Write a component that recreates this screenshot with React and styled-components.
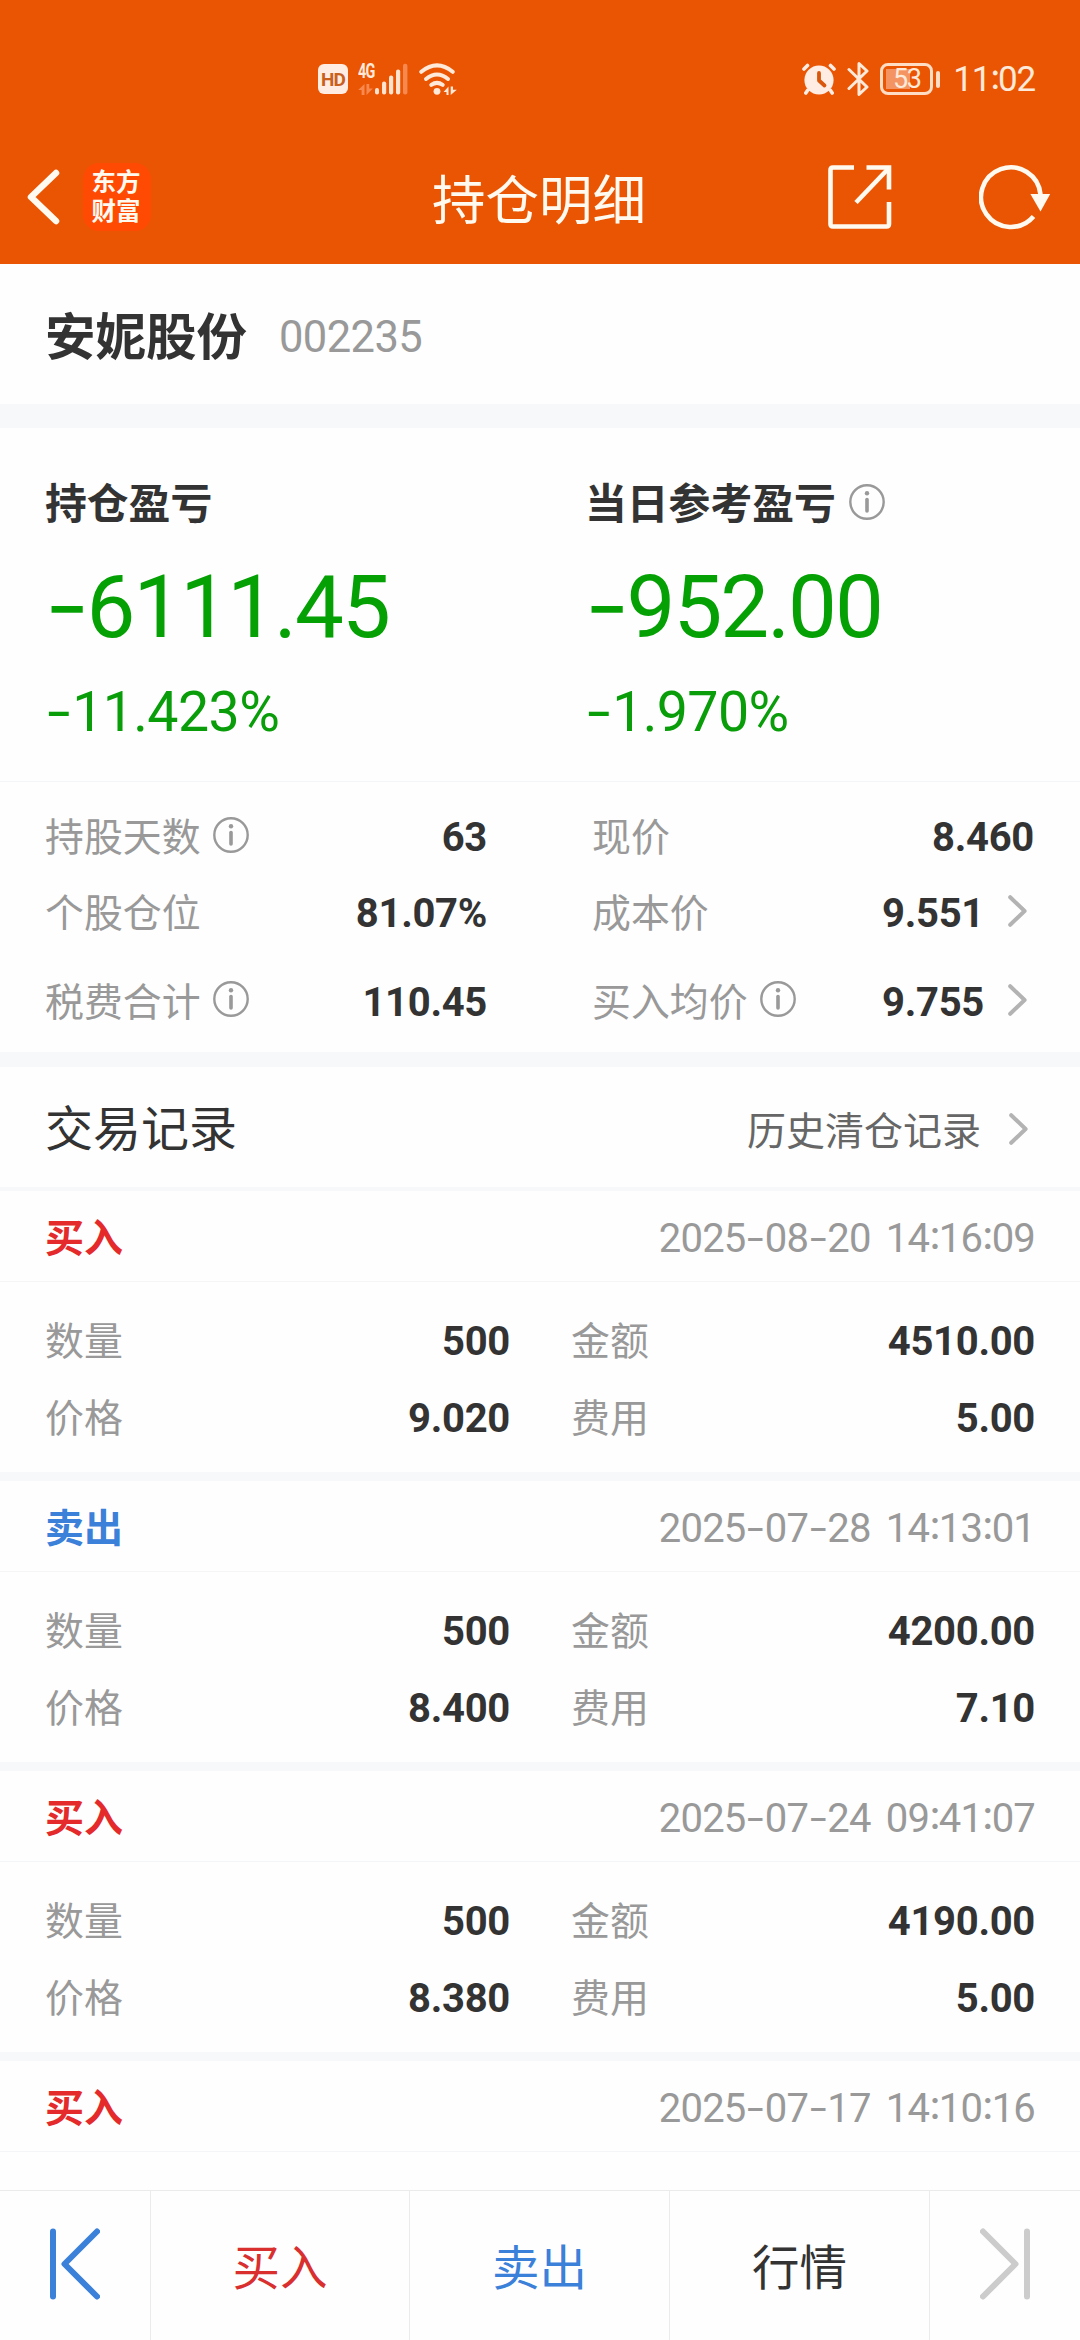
import React from "react";
import styled, { createGlobalStyle } from "styled-components";

const GlobalStyle = createGlobalStyle`
  * { box-sizing: border-box; }
  body { margin: 0; background: #fefefe; }
  svg { display: block; flex: none; }
`;

const Screen = styled.div`
  display: flex;
  flex-direction: column;
  width: 1080px;
  height: 2340px;
  overflow: hidden;
  background: #fefefe;
  color: #333;
  font-family: Roboto, "Noto Sans CJK SC", sans-serif;
`;

const Header = styled.header`
  flex: none;
  height: 264px;
  background: #ea5504;
  color: #fffaf0;
`;

const StatusBar = styled.div`
  display: flex;
  justify-content: space-between;
  align-items: center;
  height: 132px;
  padding: 26px 45px 0 318px;
`;

const StatusGroup = styled.div`
  display: flex;
  align-items: center;
  gap: ${(p) => p.$gap}px;
`;

const HdBadge = styled.div`
  width: 30px;
  height: 30px;
  border-radius: 6px;
  background: #ffece2;
  color: #c9601f;
  font-size: 19px;
  font-weight: 700;
  line-height: 31px;
  text-align: center;
  letter-spacing: -1px;
`;

const Cellular = styled.div`
  display: flex;
  align-items: flex-end;
  height: 32px;
  margin-left: -1px;
`;

const CellInfo = styled.div`
  display: flex;
  flex-direction: column;
  justify-content: space-between;
  width: 17px;
  height: 32px;
`;

const NetLabel = styled.span`
  height: 17px;
  font-size: 20px;
  font-weight: 700;
  line-height: 17px;
  letter-spacing: -1px;
  color: #ffe9d8;
  transform: scaleX(0.72);
  transform-origin: left;
`;

const Clock = styled.span`
  margin-left: 2px;
  font-size: 35px;
  line-height: 40px;
  padding-top: 2px;
  letter-spacing: -1.2px;
  color: #ffe9d8;
`;

const Battery = styled.div`
  display: flex;
  align-items: center;
  gap: 3px;
`;

const BatteryBody = styled.div`
  width: 53px;
  height: 32px;
  border: 3px solid #ffdcc4;
  border-radius: 8px;
  background: linear-gradient(#f49463, #f49463) 3px 3px / 24px 20px no-repeat;
  color: #ffe9d8;
  font-size: 27px;
  line-height: 27px;
  letter-spacing: -1.5px;
  text-align: center;
`;

const BatteryTip = styled.div`
  width: 4px;
  height: 17px;
  border-radius: 2px;
  background: #ffdcc4;
`;

const TitleBar = styled.div`
  display: grid;
  grid-template-columns: 1fr auto 1fr;
  align-items: center;
  height: 132px;
  padding: 0 29px 0 27px;
`;

const TitleSide = styled.div`
  display: flex;
  align-items: center;
  justify-content: ${(p) => (p.$end ? "flex-end" : "flex-start")};
  gap: ${(p) => p.$gap}px;
  padding-bottom: 3px;
`;

const Logo = styled.div`
  display: flex;
  flex-direction: column;
  align-items: center;
  width: 68px;
  height: 68px;
  padding: 5px 2px 0 0;
  border-radius: 16px;
  background: #ff4a03;
  font-size: 24.5px;
  font-weight: 700;
  line-height: 29px;
`;

const Title = styled.h1`
  margin: 0;
  padding-top: 8px;
  font-size: 53.5px;
  font-weight: 400;
  line-height: 64px;
`;

const Divider = styled.div`
  flex: none;
  height: ${(p) => p.$size}px;
  background: ${(p) => (p.$size > 1 ? "#f6f8fa" : "#f4f5f6")};
`;

const Content = styled.main`
  flex: 1;
  min-height: 0;
  overflow: hidden;
  display: flex;
  flex-direction: column;
`;

const StockRow = styled.section`
  flex: none;
  display: flex;
  align-items: center;
  gap: 32px;
  height: 140px;
  padding: 8px 45px 0;
`;

const StockName = styled.h2`
  margin: 0;
  font-size: 50.5px;
  line-height: 60px;
  font-weight: 700;
`;

const StockCode = styled.span`
  font-size: 43.5px;
  line-height: 60px;
  letter-spacing: -0.6px;
  color: #999;
`;

const ProfitSection = styled.section`
  flex: none;
  display: grid;
  grid-template-columns: 540px 540px;
  height: 353px;
`;

const ProfitCard = styled.div`
  padding: 52px 0 0 45px;
  color: #0a9d0a;
`;

const ProfitTitle = styled.div`
  display: flex;
  align-items: center;
  gap: 13px;
  height: 50px;
  font-size: 41.8px;
  line-height: 50px;
  font-weight: 700;
  color: #333;
`;

const ProfitAmount = styled.div`
  height: 100px;
  margin-top: 27px;
  font-size: 87px;
  line-height: 100px;
  letter-spacing: -2px;
  color: #04a004;
`;

const ProfitRate = styled.div`
  height: 70px;
  margin-top: 21px;
  font-size: 55.5px;
  line-height: 70px;
  letter-spacing: -0.6px;
`;

const Stats = styled.section`
  flex: none;
  display: grid;
  grid-template-columns: 442px 442px;
  grid-template-rows: 76px 75px 103px;
  column-gap: 105px;
  height: 270px;
  padding: 18px 45px 0;
`;

const Field = styled.div`
  display: flex;
  align-items: center;
  justify-content: space-between;
`;

const FieldLabel = styled.span`
  display: flex;
  align-items: center;
  gap: 12px;
  font-size: 38.9px;
  line-height: 56px;
  color: #999;
`;

const FieldValue = styled.span`
  display: flex;
  align-items: center;
  gap: 24px;
  font-size: 40px;
  line-height: 56px;
  letter-spacing: -0.3px;
  font-weight: 700;
  color: #333;
`;

const TradeHead = styled.section`
  flex: none;
  display: flex;
  align-items: center;
  justify-content: space-between;
  height: 120px;
  padding: 6px 45px 0;
`;

const TradeTitle = styled.h3`
  margin: 0;
  font-size: 48px;
  line-height: 60px;
  font-weight: 400;
`;

const HistoryLink = styled.a`
  display: flex;
  align-items: center;
  gap: 28px;
  padding-top: 3px;
  font-size: 39px;
  line-height: 56px;
  color: #666;
`;

const Record = styled.article`
  flex: none;
  height: 290px;
`;

const RecordHead = styled.div`
  display: flex;
  align-items: center;
  justify-content: space-between;
  height: 90px;
  padding: 6px 45px 0;
`;

const Side = styled.span`
  font-size: 39px;
  line-height: 56px;
  font-weight: 700;
  color: ${(p) => (p.$sell ? "#3b80d9" : "#e42a2a")};
`;

const Time = styled.time`
  font-size: 40px;
  line-height: 56px;
  letter-spacing: -0.8px;
  word-spacing: 6px;
  color: #999;
`;

const RecordBody = styled.div`
  display: grid;
  grid-template-columns: 465px 464px;
  grid-template-rows: 76px 77px;
  column-gap: 61px;
  height: 190px;
  padding: 22px 45px 0;
`;

const BottomBar = styled.footer`
  flex: none;
  display: grid;
  grid-template-columns: 151px 259px 260px 260px 150px;
  height: 150px;
  border-top: 1px solid #ebebeb;
`;

const Tab = styled.button`
  display: flex;
  align-items: center;
  justify-content: center;
  padding: ${(p) => (p.$icon ? "0 0 4px" : "7px 0 0")};
  border: 0;
  border-right: ${(p) => (p.$last ? "0" : "1px solid #ebebeb")};
  background: none;
  font-family: inherit;
  font-size: 47.5px;
  line-height: 60px;
  color: ${(p) => p.$color || "#333"};
`;

const Dash = styled.span`
  display: inline-block;
  margin: 0 0.02em;
  font-family: Inter, sans-serif;
  line-height: 1;
  transform: scale(1.12, 0.95);
`;

const Colon = styled.span`
  margin-right: -0.03em;
  font-family: Inter, sans-serif;
  line-height: 0;
  vertical-align: 0.07em;
`;

/* Wide dashes and raised colons between the digits. */
const Figures = ({ children }) =>
  children
    .split(/([-:])/)
    .filter(Boolean)
    .map((part, i) => {
      if (part === "-") return <Dash key={i}>-</Dash>;
      if (part === ":") return <Colon key={i}>:</Colon>;
      return part;
    });

const InfoIcon = () => (
  <svg width="36" height="36" viewBox="0 0 36 36">
    <circle cx="18" cy="18" r="16.7" fill="none" stroke="#999" strokeWidth="2.4" />
    <circle cx="18" cy="9.2" r="2.2" fill="#999" />
    <path d="M18 15.5V27" stroke="#999" strokeWidth="3.6" strokeLinecap="round" />
  </svg>
);

const InfoBox = styled.span`
  display: flex;
  padding-bottom: 7px;
`;

const ChevronBox = styled.span`
  display: flex;
  padding: 0 7px 6px 0;
`;

const Chevron = () => (
  <ChevronBox>
    <svg width="19" height="32" viewBox="0 0 19 32">
      <path d="M2.2 2.2L16.6 16L2.2 29.8" fill="none" stroke="#b3b3b3" strokeWidth="4" strokeLinecap="round" strokeLinejoin="round" />
    </svg>
  </ChevronBox>
);

const SignalBars = () => (
  <svg width="33" height="32" viewBox="0 0 33 32" fill="#ffe3cf">
    <rect x="0" y="25" width="4" height="6.5" rx="2" />
    <rect x="7" y="18.5" width="4.2" height="13" rx="2" />
    <rect x="14" y="12.5" width="4.2" height="19" rx="2" />
    <rect x="21" y="6.5" width="4.2" height="25" rx="2" />
    <rect x="28" y="0.8" width="4.4" height="30.7" rx="2" fill="#f7894f" />
  </svg>
);

const DataArrows = ({ color }) => (
  <svg width="15" height="11" viewBox="0 0 15 11" fill={color}>
    <path d="M6.5 0V11H3.6V6H0.2Z" />
    <path d="M8.5 0V11L14.8 4.6H11.2V0Z" />
  </svg>
);

const WifiIcon = () => (
  <svg width="39" height="33" viewBox="0 0 39 33">
    <g fill="none" stroke="#ffe9d8" strokeWidth="4" strokeLinecap="round">
      <path d="M2.3 8.8Q18 -4 33.7 8.8" />
      <path d="M7 16Q18 7 29 16" />
      <path d="M12.3 21.8Q18 18 23.7 21.8" />
    </g>
    <circle cx="18" cy="28.3" r="3.4" fill="#ffe9d8" />
    <path d="M29.5 23.5V32H27.5V29H24.5Z M31.7 23.5V32L37.8 26.8H34V23.5Z" fill="#ffe9d8" />
  </svg>
);

const AlarmIcon = () => (
  <svg width="34" height="32" viewBox="0 0 34 32">
    <circle cx="17" cy="17" r="14.6" fill="#ffece2" />
    <path d="M2 6L5.5 2.5M32 6L28.5 2.5M5.5 27.5L3.8 30M28.5 27.5L30.2 30" stroke="#ffece2" strokeWidth="3.6" strokeLinecap="round" />
    <path d="M17 10V17.5L22.5 22.5" fill="none" stroke="#d9560d" strokeWidth="3.8" strokeLinecap="round" strokeLinejoin="round" />
  </svg>
);

const BluetoothIcon = () => (
  <svg width="22" height="36" viewBox="0 0 22 36">
    <path d="M2 8.5L20 26L12 33.5V2.5L20 10L2 27.5" fill="none" stroke="#ffe9d8" strokeWidth="3" strokeLinecap="round" strokeLinejoin="round" />
  </svg>
);

const BackIcon = () => (
  <svg width="33" height="56" viewBox="0 0 33 56">
    <path d="M29 4L4 28L29 52" fill="none" stroke="#fffaf0" strokeWidth="6.5" strokeLinecap="round" strokeLinejoin="round" />
  </svg>
);

const ShareIcon = () => (
  <svg width="64" height="64" viewBox="0 0 64 64" fill="none" stroke="#fffaf0" strokeWidth="4.6">
    <path d="M26 2.5H5Q2.5 2.5 2.5 5V59Q2.5 61.5 5 61.5H58.5Q61 61.5 61 59V37" />
    <path d="M38.5 2.5H61V24.5" />
    <path d="M60 4L28 37.5" />
  </svg>
);

const RefreshIcon = () => (
  <svg width="72" height="66" viewBox="0 0 72 66">
    <path d="M54.5 52.5A29.8 29.8 0 1 1 61.5 30.5" fill="none" stroke="#fffaf0" strokeWidth="4.6" />
    <path d="M51.4 30H71.2L61.5 47.5Z" fill="#fffaf0" />
  </svg>
);

const EndIcon = ({ color, flip }) => (
  <svg width="50" height="72" viewBox="0 0 50 72">
    <g transform={flip ? "translate(50 0) scale(-1 1)" : undefined} fill="none" stroke={color} strokeWidth="6" strokeLinecap="round" strokeLinejoin="round">
      <path d="M3 3.5V68.5" />
      <path d="M47 3.5L14.5 36L47 68.5" />
    </g>
  </svg>
);

const profits = [
  { title: "持仓盈亏", amount: "-6111.45", rate: "-11.423%" },
  { title: "当日参考盈亏", amount: "-952.00", rate: "-1.970%", info: true },
];

const stats = [
  { label: "持股天数", value: "63", info: true },
  { label: "现价", value: "8.460" },
  { label: "个股仓位", value: "81.07%" },
  { label: "成本价", value: "9.551", link: true },
  { label: "税费合计", value: "110.45", info: true },
  { label: "买入均价", value: "9.755", info: true, link: true },
];

const records = [
  { side: "买入", time: "2025-08-20 14:16:09", qty: "500", amount: "4510.00", price: "9.020", fee: "5.00" },
  { side: "卖出", time: "2025-07-28 14:13:01", qty: "500", amount: "4200.00", price: "8.400", fee: "7.10" },
  { side: "买入", time: "2025-07-24 09:41:07", qty: "500", amount: "4190.00", price: "8.380", fee: "5.00" },
  { side: "买入", time: "2025-07-17 14:10:16" },
];

const LabeledValue = ({ label, value, info, link }) => (
  <Field>
    <FieldLabel>
      {label}
      {info && <InfoBox><InfoIcon /></InfoBox>}
    </FieldLabel>
    <FieldValue>
      {value}
      {link && <Chevron />}
    </FieldValue>
  </Field>
);

export default function App() {
  return (
    <Screen>
      <GlobalStyle />
      <Header>
        <StatusBar>
          <StatusGroup $gap={11}>
            <HdBadge>HD</HdBadge>
            <Cellular>
              <CellInfo>
                <NetLabel>4G</NetLabel>
                <DataArrows color="#f7894f" />
              </CellInfo>
              <SignalBars />
            </Cellular>
            <WifiIcon />
          </StatusGroup>
          <StatusGroup $gap={11}>
            <AlarmIcon />
            <BluetoothIcon />
            <Battery>
              <BatteryBody>53</BatteryBody>
              <BatteryTip />
            </Battery>
            <Clock><Figures>11:02</Figures></Clock>
          </StatusGroup>
        </StatusBar>
        <TitleBar>
          <TitleSide $gap={23}>
            <BackIcon />
            <Logo>
              <span>东方</span>
              <span>财富</span>
            </Logo>
          </TitleSide>
          <Title>持仓明细</Title>
          <TitleSide $end $gap={87}>
            <ShareIcon />
            <RefreshIcon />
          </TitleSide>
        </TitleBar>
      </Header>

      <Content>
        <StockRow>
          <StockName>安妮股份</StockName>
          <StockCode>002235</StockCode>
        </StockRow>
        <Divider $size={24} />

        <ProfitSection>
          {profits.map((p) => (
            <ProfitCard key={p.title}>
              <ProfitTitle>
                {p.title}
                {p.info && <InfoBox><InfoIcon /></InfoBox>}
              </ProfitTitle>
              <ProfitAmount><Figures>{p.amount}</Figures></ProfitAmount>
              <ProfitRate><Figures>{p.rate}</Figures></ProfitRate>
            </ProfitCard>
          ))}
        </ProfitSection>
        <Divider $size={1} />

        <Stats>
          {stats.map((s) => <LabeledValue key={s.label} {...s} />)}
        </Stats>
        <Divider $size={15} />

        <TradeHead>
          <TradeTitle>交易记录</TradeTitle>
          <HistoryLink>
            历史清仓记录
            <Chevron />
          </HistoryLink>
        </TradeHead>
        <Divider $size={4} />

        {records.map((r) => (
          <Record key={r.time}>
            <RecordHead>
              <Side $sell={r.side === "卖出"}>{r.side}</Side>
              <Time><Figures>{r.time}</Figures></Time>
            </RecordHead>
            <Divider $size={1} />
            {r.qty && (
              <>
                <RecordBody>
                  <LabeledValue label="数量" value={r.qty} />
                  <LabeledValue label="金额" value={r.amount} />
                  <LabeledValue label="价格" value={r.price} />
                  <LabeledValue label="费用" value={r.fee} />
                </RecordBody>
                <Divider $size={9} />
              </>
            )}
          </Record>
        ))}
      </Content>

      <BottomBar>
        <Tab $icon><EndIcon color="#3b80d9" /></Tab>
        <Tab $color="#d92f2f">买入</Tab>
        <Tab $color="#3b80d9">卖出</Tab>
        <Tab>行情</Tab>
        <Tab $icon $last><EndIcon color="#ccc" flip /></Tab>
      </BottomBar>
    </Screen>
  );
}
